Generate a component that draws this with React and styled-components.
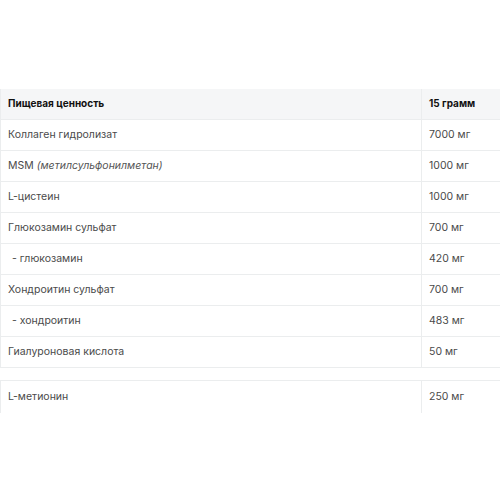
import React from "react";
import styled, { createGlobalStyle } from "styled-components";

const GlobalStyle = createGlobalStyle`
  html, body {
    margin: 0;
    padding: 0;
    background: #ffffff;
    font-family: Inter, "Noto Sans", sans-serif;
  }
`;

const rows = [
  { name: "Коллаген гидролизат", value: "7000 мг" },
  { name: "MSM", note: "(метилсульфонилметан)", value: "1000 мг" },
  { name: "L-цистеин", value: "1000 мг" },
  { name: "Глюкозамин сульфат", value: "700 мг" },
  { name: " - глюкозамин", value: "420 мг", sub: true },
  { name: "Хондроитин сульфат", value: "700 мг" },
  { name: " - хондроитин", value: "483 мг", sub: true },
  { name: "Гиалуроновая кислота", value: "50 мг" },
];

const App = () => {
  return (
    <React.Fragment>
      <GlobalStyle />
      <Page>
        <Table>
          <Row head>
            <NameCell head>Пищевая ценность</NameCell>
            <ValueCell head>15 грамм</ValueCell>
          </Row>
          {rows.map((item) => (
            <Row key={item.name}>
              <NameCell sub={item.sub}>
                {item.name.trim()}
                {item.note && <Note> {item.note}</Note>}
              </NameCell>
              <ValueCell>{item.value}</ValueCell>
            </Row>
          ))}
        </Table>
        <Table gap>
          <Row last>
            <NameCell>L-метионин</NameCell>
            <ValueCell>250 мг</ValueCell>
          </Row>
        </Table>
      </Page>
    </React.Fragment>
  );
};

const Page = styled.div`
  padding-top: 89px;
  width: 500px;
`;

const Table = styled.div`
  display: flex;
  flex-direction: column;
  margin-top: ${(p) => (p.gap ? "12px" : "0")};
  border-top: ${(p) => (p.gap ? "1px solid #ebedee" : "none")};
`;

const Row = styled.div`
  display: grid;
  grid-template-columns: 422px 1fr;
  height: ${(p) => (p.last ? "32px" : "30px")};
  background: ${(p) => (p.head ? "#f5f6f7" : "#ffffff")};
  border-bottom: ${(p) => (p.last ? "none" : "1px solid #ebedee")};
`;

const NameCell = styled.div`
  display: flex;
  align-items: center;
  padding-bottom: 2px;
  border-left: 1px solid #ebedee;
  border-right: 1px solid #ebedee;
  padding-left: ${(p) => (p.sub ? "11px" : "7px")};
  font-size: ${(p) => (p.head ? "10px" : "10.5px")};
  font-weight: ${(p) => (p.head ? 700 : 400)};
  color: ${(p) => (p.head ? "#111111" : "#4a4a4a")};
  white-space: pre;
`;

const ValueCell = styled.div`
  display: flex;
  align-items: center;
  padding-bottom: 2px;
  padding-left: 7px;
  font-size: ${(p) => (p.head ? "10px" : "10.5px")};
  font-weight: ${(p) => (p.head ? 700 : 400)};
  color: ${(p) => (p.head ? "#111111" : "#4a4a4a")};
`;

const Note = styled.span`
  font-style: italic;
  color: #555555;
`;

export default App;
